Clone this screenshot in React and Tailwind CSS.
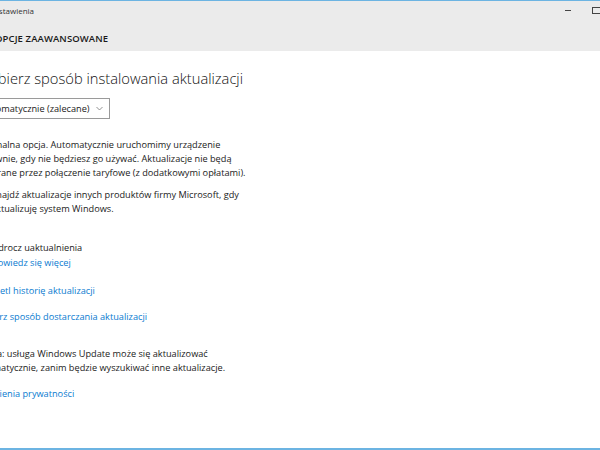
import React from 'react'

const font = { fontFamily: '"Open Sans", "Noto Sans", sans-serif' }

function CheckRow({ children, link }) {
  return (
    <div className="flex items-start gap-[5px]">
      <div className="mt-[1px] h-[13px] w-[13px] shrink-0 border border-[#333]" />
      <div>
        <div className="text-[#1a1a1a]">{children}</div>
        {link && <div className="mt-[1px] text-[#0a7bd0]">{link}</div>}
      </div>
    </div>
  )
}

export default function App() {
  return (
    <div className="h-[450px] w-[600px] overflow-hidden bg-white" style={font}>
      <div className="flex h-[450px] flex-col border-t border-b-2 border-[#6cb4e2]">
        {/* Title bar + page header */}
        <div className="h-[50px] bg-[#ebebeb]">
          <div className="flex h-[19px] items-center">
            <span className="-ml-[7px] text-[8px] text-[#333]">Ustawienia</span>
            <div className="ml-auto flex items-center">
              <div className="mr-[21px] h-px w-[6px] bg-[#444]" />
              <div className="h-[7px] w-[8px] border border-r-0 border-[#444]" />
            </div>
          </div>
          <div className="-ml-[5px] mt-[12px] text-[9.5px] font-semibold tracking-[0.1px] text-[#1a1a1a]">
            OPCJE ZAAWANSOWANE
          </div>
        </div>

        {/* Content */}
        <div className="-ml-[27px] flex-1 text-[9.2px] leading-[14px]">
          <h2 className="ml-[5px] mt-[17px] text-[14.7px] font-light leading-[20px] text-[#111]">
            Wybierz sposób instalowania aktualizacji
          </h2>

          <div className="mt-[10px] flex h-[21px] w-[137px] items-center border border-[#9a9a9a] pl-[7px] pr-[6px] text-[#1a1a1a]">
            <span>Automatycznie (zalecane)</span>
            <svg className="ml-auto" width="7" height="5" viewBox="0 0 7 5" fill="none">
              <path d="M0.5 1L3.5 4L6.5 1" stroke="#777" strokeWidth="0.8" />
            </svg>
          </div>

          <p className="mt-[19px] text-[#1a1a1a]">
            Optymalna opcja. Automatycznie uruchomimy urządzenie
            <br />
            ponownie, gdy nie będziesz go używać. Aktualizacje nie będą
            <br />
            pobierane przez połączenie taryfowe (z dodatkowymi opłatami).
          </p>

          <div className="mt-[8px]">
            <CheckRow>
              Znajdź aktualizacje innych produktów firmy Microsoft, gdy
              <br />
              aktualizuję system Windows.
            </CheckRow>
          </div>

          <div className="mt-[25px]">
            <CheckRow link="Dowiedz się więcej">Odrocz uaktualnienia</CheckRow>
          </div>

          <div className="mt-[14px] text-[#0a7bd0]">Wyświetl historię aktualizacji</div>
          <div className="mt-[12px] text-[#0a7bd0]">Wybierz sposób dostarczania aktualizacji</div>

          <p className="mt-[23px] text-[#1a1a1a]">
            Uwaga: usługa Windows Update może się aktualizować
            <br />
            automatycznie, zanim będzie wyszukiwać inne aktualizacje.
          </p>

          <div className="mt-[12px] text-[#0a7bd0]">Ustawienia prywatności</div>
        </div>
      </div>
    </div>
  )
}
